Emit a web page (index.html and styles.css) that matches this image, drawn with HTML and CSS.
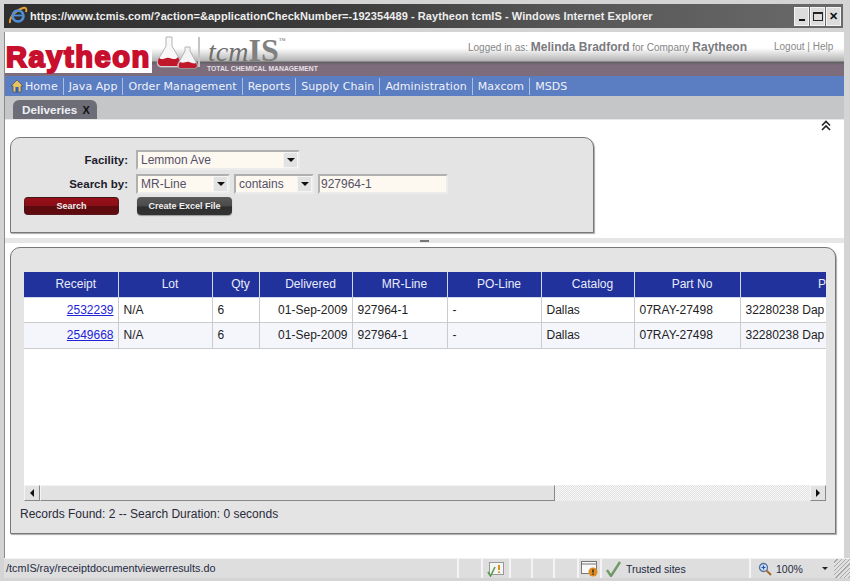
FILE: index.html
```html
<!DOCTYPE html>
<html lang="en">

<head>
    <meta charset="UTF-8">
    <meta name="viewport" content="width=device-width, initial-scale=1.0">
    <title>Raytheon tcmIS</title>
    <link rel="stylesheet" href="styles.css">
</head>

<body>
    <div class="window">
        <div class="titlebar">
            <svg class="ie-icon" width="20" height="20" viewBox="0 0 20 20">
                <path d="M2 17C1 13 6 5 15 2c3-1 4 1 3 4" fill="none" stroke="#e8a030" stroke-width="2"/>
                <circle cx="10" cy="10" r="5.5" fill="none" stroke="#4f8fd8" stroke-width="2.6"/>
                <path d="M6 9.5h8.5" stroke="#4f8fd8" stroke-width="1.8"/>
            </svg>
            <span class="title-text">https://www.tcmis.com/?action=&amp;applicationCheckNumber=-192354489 - Raytheon tcmIS - Windows Internet Explorer</span>
            <div class="win-buttons">
                <span class="win-btn"><i class="min-glyph"></i></span>
                <span class="win-btn"><i class="max-glyph"></i></span>
                <span class="win-btn close-glyph">✕</span>
            </div>
        </div>

        <div class="client">
            <div class="header">
                <div class="logo">Raytheon</div>
                <div class="brand">
                    <svg class="flasks" width="46" height="34" viewBox="0 0 46 34">
                        <path d="M10 1h6v9l8 14c2 4 0 7-3 7H5c-3 0-5-3-3-7l8-14z" fill="#f8f8f8" stroke="#b4b4b4"/>
                        <path d="M3 22c5 3 6-1 10 0s7 2 9-1l2 4c1 3-1 5-3 5H5c-3 0-4-4-2-8z" fill="#c0182a"/>
                        <path d="M29 11h5v4l7 13c1 2 0 4-2 4H24c-2 0-3-2-2-4l7-13z" fill="#f4f4f4" stroke="#b4b4b4"/>
                        <path d="M24 26c4 2 6-1 9 0s5 2 7 1l1 2c0 2-1 3-2 3H24c-2 0-2-3 0-6z" fill="#c0182a"/>
                        <path d="M43 1v30" stroke="#c4c4c4" stroke-width="2"/>
                    </svg>
                    <div class="brand-name"><em>tcm</em><b>IS</b><sup>™</sup></div>
                    <div class="brand-sub">TOTAL CHEMICAL MANAGEMENT</div>
                </div>
                <div class="user-info">
                    Logged in as: <strong>Melinda Bradford</strong> for Company <strong>Raytheon</strong>
                </div>
                <div class="user-links">Logout | Help</div>
            </div>

            <div class="nav">
                <svg class="home-icon" width="14" height="14" viewBox="0 0 14 14">
                    <path d="M7 1 1 7h2v6h8V7h2z" fill="#e8c060" stroke="#345" stroke-width=".6"/>
                    <rect x="5.5" y="8" width="3" height="5" fill="#2f5fb0"/>
                </svg>
                <a class="nav-item first">Home</a>
                <a class="nav-item">Java App</a>
                <a class="nav-item">Order Management</a>
                <a class="nav-item">Reports</a>
                <a class="nav-item">Supply Chain</a>
                <a class="nav-item">Administration</a>
                <a class="nav-item">Maxcom</a>
                <a class="nav-item last">MSDS</a>
            </div>

            <div class="tabstrip">
                <div class="tab">Deliveries <b>X</b></div>
            </div>

            <div class="content">
                <div class="collapse-row">
                    <svg width="12" height="12" viewBox="0 0 12 12">
                        <path d="M2 5.5 6 1.5l4 4M2 10 6 6l4 4" fill="none" stroke="#222" stroke-width="1.6"/>
                    </svg>
                </div>

                <form class="search-panel">
                    <div class="form-row">
                        <label class="form-label">Facility:</label>
                        <div class="select facility"><span>Lemmon Ave</span><i class="arrow"></i></div>
                    </div>
                    <div class="form-row">
                        <label class="form-label">Search by:</label>
                        <div class="select search-by"><span>MR-Line</span><i class="arrow"></i></div>
                        <div class="select op"><span>contains</span><i class="arrow"></i></div>
                        <div class="select search-text"><span>927964-1</span></div>
                    </div>
                    <div class="form-row buttons">
                        <button type="button" class="btn btn-red">Search</button>
                        <button type="button" class="btn btn-dark">Create Excel File</button>
                    </div>
                </form>

                <div class="divider"><i></i></div>

                <div class="results-panel">
                    <div class="grid">
                        <div class="grid-scroll">
                            <table>
                                <colgroup>
                                    <col class="c-receipt"><col class="c-lot"><col class="c-qty"><col class="c-date"><col class="c-mr"><col class="c-po"><col class="c-cat"><col class="c-part"><col class="c-desc">
                                </colgroup>
                                <thead>
                                    <tr>
                                        <th>Receipt</th>
                                        <th>Lot</th>
                                        <th>Qty</th>
                                        <th>Delivered</th>
                                        <th>MR-Line</th>
                                        <th>PO-Line</th>
                                        <th>Catalog</th>
                                        <th>Part No</th>
                                        <th class="th-clip"><span>P</span></th>
                                    </tr>
                                </thead>
                                <tbody>
                                    <tr>
                                        <td class="right"><a href="#">2532239</a></td>
                                        <td>N/A</td>
                                        <td>6</td>
                                        <td class="right">01-Sep-2009</td>
                                        <td>927964-1</td>
                                        <td>-</td>
                                        <td>Dallas</td>
                                        <td>07RAY-27498</td>
                                        <td>32280238 Dap</td>
                                    </tr>
                                    <tr class="alt">
                                        <td class="right"><a href="#">2549668</a></td>
                                        <td>N/A</td>
                                        <td>6</td>
                                        <td class="right">01-Sep-2009</td>
                                        <td>927964-1</td>
                                        <td>-</td>
                                        <td>Dallas</td>
                                        <td>07RAY-27498</td>
                                        <td>32280238 Dap</td>
                                    </tr>
                                </tbody>
                            </table>
                        </div>
                        <div class="scrollbar">
                            <span class="sb-btn"><i class="tri-left"></i></span>
                            <span class="sb-thumb"></span>
                            <span class="sb-track"></span>
                            <span class="sb-btn"><i class="tri-right"></i></span>
                        </div>
                    </div>
                    <div class="records">Records Found: 2 -- Search Duration: 0 seconds</div>
                </div>
            </div>

            <div class="statusbar">
                <div class="st-url">/tcmIS/ray/receiptdocumentviewerresults.do</div>
                <div class="st-cell w24"></div>
                <div class="st-cell w28">
                    <svg width="20" height="16" viewBox="0 0 20 16">
                        <rect x="3.5" y="1.5" width="14" height="12" fill="#f4f4f4" stroke="#999"/>
                        <path d="M13 4v5M13 10.5v1.5" stroke="#d89020" stroke-width="2"/>
                        <path d="M2 11l2.5 4L9 6" fill="none" stroke="#5a9a50" stroke-width="1.6"/>
                    </svg>
                </div>
                <div class="st-cell w22"></div>
                <div class="st-cell w22"></div>
                <div class="st-cell w24"></div>
                <div class="st-cell w23">
                    <svg width="20" height="18" viewBox="0 0 20 18">
                        <rect x="1.5" y="1.5" width="15" height="12" fill="#f8f8f8" stroke="#777"/>
                        <path d="M1.5 4h15" stroke="#777"/>
                        <circle cx="13" cy="12" r="4.5" fill="#dd8a20"/>
                        <path d="M13 9.5v3M13 13.6v1.2" stroke="#222" stroke-width="1.4"/>
                    </svg>
                </div>
                <div class="st-zone">
                    <svg width="17" height="16" viewBox="0 0 17 16">
                        <path d="M2 9l4 6L15 1" fill="none" stroke="#6f9a68" stroke-width="2.4"/>
                    </svg>
                    <span>Trusted sites</span>
                </div>
                <div class="st-zoom">
                    <svg width="14" height="14" viewBox="0 0 14 14">
                        <circle cx="5.5" cy="5.5" r="4" fill="#cfe0f8" stroke="#56729c" stroke-width="1.3"/>
                        <path d="M3.5 5.5h4M5.5 3.5v4" stroke="#2050b0" stroke-width="1.2"/>
                        <path d="M8.5 8.5 13 13" stroke="#a0682c" stroke-width="2"/>
                    </svg>
                    <span>100%</span>
                    <i class="zoom-arrow"></i>
                </div>
                <div class="st-grip"></div>
            </div>
        </div>
    </div>
</body>

</html>
```

FILE: styles.css
```css
* {
    box-sizing: border-box;
}
html, body {
    margin: 0;
    padding: 0;
}
body {
    width: 850px;
    height: 581px;
    overflow: hidden;
    font-family: "Liberation Sans", Arial, sans-serif;
    font-size: 12px;
    color: #222;
    background-color: #d6d6d6;
}
.window {
    width: 850px;
    height: 581px;
    padding: 4px 6px 3px 5px;
    display: flex;
    flex-direction: column;
    background-color: #d4d4d4;
}

/* title bar */
.titlebar {
    height: 24px;
    margin: 0 1px 0 -1px;
    padding-left: 4px;
    display: flex;
    align-items: center;
    flex-shrink: 0;
    background: linear-gradient(90deg, #2f2f2f 0%, #3c3c3c 40%, #555 65%, #6a6a6a 100%);
}
.ie-icon {
    margin-right: 2px;
}
.title-text {
    font-family: "Liberation Sans", Arial, sans-serif;
    font-size: 11px;
    font-weight: bold;
    letter-spacing: 0.065px;
    color: #eeeeee;
    white-space: nowrap;
}
.win-buttons {
    margin-left: auto;
    display: flex;
    gap: 1px;
    margin-right: 2px;
}
.win-btn {
    width: 15px;
    height: 19px;
    background-color: #dcdcdc;
    border: 1px solid #f4f4f4;
    display: flex;
    align-items: center;
    justify-content: center;
}
.min-glyph {
    width: 6px;
    height: 2px;
    background-color: #111;
    margin-top: 8px;
}
.max-glyph {
    width: 10px;
    height: 9px;
    border: 1px solid #222;
    border-top-width: 2px;
}
.close-glyph {
    font-size: 11px;
    font-weight: bold;
    color: #111;
}

.client {
    flex: 1;
    min-height: 0;
    margin-top: 4px;
    display: flex;
    flex-direction: column;
    background-color: #fff;
    box-shadow: -1px 0 0 #8a8a8a;
}

/* header */
.header {
    height: 44px;
    flex-shrink: 0;
    display: flex;
    background: linear-gradient(180deg, #fff 0, #fff 16px, #b4b4b4 29px, #5f5f5f 30px, #7c6c7c 33px, #7c6c7c 44px);
}
.logo {
    width: 147px;
    height: 41px;
    padding: 9px 0 0 1px;
    background-color: #fff;
    font-family: "Liberation Sans", Arial, sans-serif;
    font-size: 29px;
    line-height: 32px;
    font-weight: bold;
    letter-spacing: 1.6px;
    color: #c8102e;
    -webkit-text-stroke: 2px #c8102e;
    white-space: nowrap;
}
.brand {
    width: 170px;
    position: relative;
    flex-shrink: 0;
}
.flasks {
    position: absolute;
    left: 4px;
    top: 4px;
}
.brand-name {
    position: absolute;
    left: 56px;
    top: 3px;
    font-family: "Liberation Serif", "Times New Roman", serif;
    font-size: 28px;
    line-height: 30px;
    color: #6f6f6f;
    white-space: nowrap;
}
.brand-name b {
    font-weight: bold;
    color: #808080;
    font-size: 32px;
}
.brand-name sup {
    font-size: 7px;
    vertical-align: 18px;
    line-height: 0;
}
.brand-sub {
    position: absolute;
    left: 55px;
    top: 32px;
    font-size: 6.8px;
    font-weight: bold;
    line-height: 9px;
    color: #e4e0e4;
    white-space: nowrap;
}
.user-info {
    margin-left: 146px;
    padding-top: 8px;
    font-size: 10px;
    color: #858585;
    white-space: nowrap;
}
.user-info strong {
    font-size: 12px;
    font-weight: bold;
    color: #7a7a80;
}
.user-links {
    margin-left: 27px;
    padding-top: 9px;
    font-size: 10px;
    color: #888;
    white-space: nowrap;
}

/* menu */
.nav {
    height: 20px;
    flex-shrink: 0;
    padding-left: 5px;
    display: flex;
    align-items: center;
    background-color: #5b7dc2;
}
.nav-item {
    font-family: "DejaVu Sans", Verdana, sans-serif;
    font-size: 11px;
    letter-spacing: 0.06px;
    line-height: 17px;
    color: #f0f2f8;
    padding: 0 5px;
    border-right: 1px solid #a9bfe4;
    white-space: nowrap;
}
.nav-item.first {
    padding-left: 1px;
}
.nav-item.last {
    border-right: 0;
}

/* tabs */
.tabstrip {
    height: 24px;
    flex-shrink: 0;
    padding: 4px 0 0 8px;
    background-color: #c4c6c8;
    border-bottom: 1px solid #e8e8e8;
}
.tab {
    width: 84px;
    height: 19px;
    padding-left: 9px;
    border-radius: 6px 6px 0 0;
    background-color: #6d6d78;
    font-size: 11.7px;
    font-weight: bold;
    line-height: 20px;
    color: #eef0f4;
}
.tab b {
    color: #111;
    font-size: 11px;
    margin-left: 2px;
}

/* page body */
.content {
    flex: 1;
    min-height: 0;
    padding: 0 8px 0 5px;
    background-color: #fff;
}
.collapse-row {
    height: 17px;
    padding-right: 4px;
    display: flex;
    justify-content: flex-end;
}
.search-panel {
    width: 584px;
    height: 96px;
    padding-top: 10px;
    background-color: #e4e4e4;
    border: 1px solid #787878;
    border-radius: 10px 10px 0 0;
    box-shadow: 1px 1px 1px #aaa;
}
.form-row {
    display: flex;
    align-items: center;
    height: 24px;
}
.form-label {
    width: 125px;
    padding-right: 8px;
    text-align: right;
    font-size: 11.5px;
    font-weight: bold;
    color: #1c1c2c;
}
.select {
    height: 20px;
    display: flex;
    align-items: center;
    padding-left: 3px;
    margin-right: 4px;
    background-color: #fdf8f0;
    border: 2px solid #b0b0b0;
    border-right-color: #ececec;
    border-bottom-color: #ececec;
    color: #555068;
    position: relative;
}
.facility {
    width: 164px;
}
.search-by {
    width: 94px;
}
.op {
    width: 80px;
}
.search-text {
    width: 130px;
    padding-left: 1px;
}
.arrow {
    position: absolute;
    right: 0;
    top: 0;
    width: 15px;
    height: 16px;
    background-color: #e2e2e2;
    border: 1px solid #f4f4f4;
}
.arrow::after {
    content: "";
    position: absolute;
    left: 3px;
    top: 5px;
    border: 4px solid transparent;
    border-top: 4px solid #111;
    border-bottom: 0;
}
.buttons {
    height: 18px;
    margin-top: 1px;
    padding-left: 13px;
    gap: 18px;
}
.btn {
    width: 95px;
    height: 18px;
    padding: 0;
    border: 0;
    border-radius: 4px;
    font-family: "Liberation Sans", Arial, sans-serif;
    font-size: 9px;
    font-weight: bold;
    color: #f0f0f0;
}
.btn-red {
    background: linear-gradient(180deg, #98101a 0%, #8a0e16 50%, #5c0a0e 52%, #600b0f 100%);
    border: 1px dotted #222;
}
.btn-dark {
    background: linear-gradient(180deg, #5a5a5a 0%, #4a4a4a 50%, #2e2e2e 55%, #333 100%);
    box-shadow: 0 1px 1px #999;
}
.divider {
    height: 5px;
    margin: 5px -8px 4px -5px;
    background-color: #e6e6e6;
    display: flex;
    justify-content: center;
    align-items: center;
}
.divider i {
    width: 9px;
    height: 2px;
    background-color: #777;
}
.results-panel {
    width: 826px;
    height: 287px;
    padding: 24px 9px 0 13px;
    background-color: #e4e4e4;
    border: 1px solid #787878;
    border-radius: 10px 10px 0 0;
    box-shadow: 1px 1px 1px #aaa;
}

/* grid */
.grid {
    width: 802px;
    height: 229px;
    background-color: #fff;
    display: flex;
    flex-direction: column;
}
.grid-scroll {
    flex: 1;
    min-height: 0;
    overflow: hidden;
}
table {
    width: 802px;
    table-layout: fixed;
    border-collapse: collapse;
}
.c-receipt { width: 94px; }
.c-lot { width: 94px; }
.c-qty { width: 47px; }
.c-date { width: 93px; }
.c-mr { width: 95px; }
.c-po { width: 94px; }
.c-cat { width: 93px; }
.c-part { width: 106px; }
.c-desc { width: 86px; }
th {
    height: 25px;
    padding: 0 4px 0 14px;
    background-color: #21329c;
    border: 1px solid #cfd8e8;
    border-top: 0;
    font-size: 12px;
    font-weight: normal;
    color: #e8ecf8;
    text-align: center;
    white-space: nowrap;
}
th.th-clip {
    text-align: right;
    padding: 0;
}
td {
    height: 25px;
    padding: 0 4px 0 5px;
    border: 1px solid #cccccc;
    border-top: 0;
    font-size: 12px;
    color: #222;
    white-space: nowrap;
    overflow: hidden;
}
th:first-child, td:first-child {
    border-left: 0;
}
th:last-child, td:last-child {
    border-right: 0;
}
tr.alt td {
    height: 26px;
    background-color: #f4f6fc;
}
td.right {
    text-align: right;
}
td a {
    color: #2222d8;
}

/* horizontal scrollbar */
.scrollbar {
    height: 16px;
    flex-shrink: 0;
    display: flex;
    background-color: #f2f2f2;
}
.sb-btn {
    width: 16px;
    display: flex;
    align-items: center;
    justify-content: center;
    background-color: #e2e2e2;
    border: 1px solid #f4f4f4;
    border-right-color: #888;
    border-bottom-color: #888;
}
.tri-left {
    border: 4px solid transparent;
    border-left: 0;
    border-right: 4px solid #111;
}
.tri-right {
    border: 4px solid transparent;
    border-right: 0;
    border-left: 4px solid #111;
}
.sb-thumb {
    width: 515px;
    background-color: #e2e2e2;
    border: 1px solid #f4f4f4;
    border-right-color: #888;
    border-bottom-color: #888;
}
.sb-track {
    flex: 1;
    background-color: #f4f4f4;
    background-image: repeating-conic-gradient(#e2e2e2 0 25%, #f8f8f8 0 50%);
    background-size: 2px 2px;
}
.records {
    margin: 6px 0 0 -4px;
    font-size: 12px;
    line-height: 14px;
    color: #2a2a3a;
}

/* status bar */
.statusbar {
    height: 20px;
    margin: 0 -6px 0 -1px;
    flex-shrink: 0;
    display: flex;
    align-items: stretch;
    background-color: #dedede;
    border-top: 1px solid #f2f2f2;
    font-size: 10.5px;
    color: #1f2a44;
}
.st-url {
    width: 455px;
    padding-left: 2px;
    font-size: 10.8px;
    line-height: 18px;
    white-space: nowrap;
    border-right: 2px solid #f4f4f4;
}
.st-cell {
    display: flex;
    align-items: center;
    justify-content: center;
    border-right: 2px solid #f4f4f4;
}
.w22 { width: 22px; }
.w23 { width: 23px; }
.w24 { width: 24px; }
.w28 { width: 28px; }
.st-zone {
    width: 149px;
    display: flex;
    align-items: center;
    gap: 4px;
    padding-left: 3px;
    border-right: 2px solid #f4f4f4;
}
.st-zoom {
    width: 83px;
    display: flex;
    align-items: center;
    padding-left: 7px;
    gap: 4px;
}
.zoom-arrow {
    margin-left: 15px;
    border: 3px solid transparent;
    border-top: 3px solid #222;
    border-bottom: 0;
}
.st-grip {
    flex: 1;
    background: repeating-linear-gradient(135deg, #e0e0e0 0 2px, #a8a8a8 2px 3px);
}
```
